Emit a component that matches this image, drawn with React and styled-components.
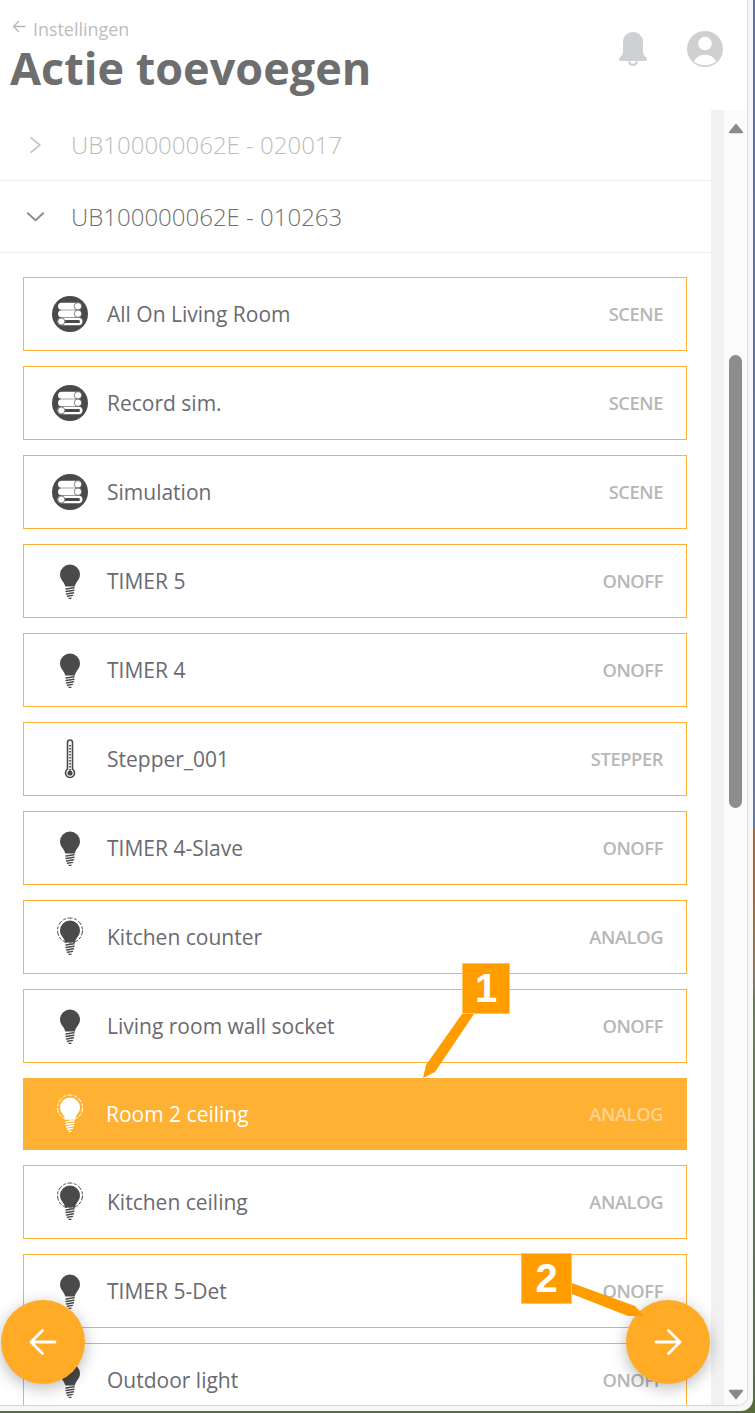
import React from 'react';
import styled, { createGlobalStyle } from 'styled-components';

const Global = createGlobalStyle`
  html, body { margin: 0; padding: 0; background: #fff; }
  #root { width: 755px; height: 1413px; overflow: hidden; }
  * { box-sizing: border-box; }
`;

const Desktop = styled.div`
  position: relative;
  width: 755px;
  height: 1413px;
  overflow: hidden;
  font-family: "Open Sans", "Noto Sans", sans-serif;
  background: linear-gradient(180deg, #5672b0 0, #5e78ae 825px, #a9692c 830px, #a9692c 900px, #8a7a58 975px, #6d7a58 1000px, #566b3a 1413px);
`;
const Frame = styled.div`
  width: 753px;
  height: 1411px;
  padding: 0 5px 5px 0;
  background: #f6f6f6;
  border-bottom-right-radius: 12px;
`;
const Page = styled.div`
  width: 748px;
  height: 1406px;
  display: flex;
  flex-direction: column;
  background: #fff;
  border-right: 1px solid #dcdcdc;
  border-bottom: 1px solid #d8d8d8;
  border-bottom-right-radius: 10px;
  overflow: hidden;
`;
const Header = styled.header`
  height: 110px;
  flex: none;
  display: flex;
  justify-content: space-between;
  padding: 17px 24px 0 10px;
`;
const Titles = styled.div`
  display: flex;
  flex-direction: column;
`;
const Crumb = styled.div`
  display: flex;
  align-items: center;
  gap: 7px;
  padding-left: 2px;
  height: 24px;
  font-size: 17.9px;
  color: #bdbdbd;
`;
const CrumbArrow = styled.svg`
  margin-top: -4px;
`;
const Title = styled.h1`
  margin: 2px 0 0;
  font-size: 45px;
  line-height: 50px;
  font-weight: 700;
  color: #6e6e6e;
`;
const HeaderIcons = styled.div`
  display: flex;
  align-items: flex-start;
  gap: 40px;
  padding-top: 14px;
`;
const Bell = styled.svg`
  margin-top: 1px;
`;
const Body = styled.div`
  flex: 1;
  min-height: 0;
  display: flex;
`;
const ListPane = styled.div`
  width: 711px;
  flex: none;
  overflow: hidden;
`;
const GroupRow = styled.div`
  height: ${p => (p.$first ? '71px' : '72px')};
  display: flex;
  align-items: center;
  gap: 26px;
  padding-left: 26px;
  padding-bottom: ${p => (p.$first ? '1px' : '0')};
  border-bottom: 1px solid #efefef;
  font-size: 24px;
  font-weight: 300;
  color: ${p => (p.$muted ? '#bdbdbd' : '#707070')};
`;
const GroupIcon = styled.span`
  width: 19px;
  display: flex;
  justify-content: center;
  color: ${p => (p.$muted ? '#c6c6c6' : '#8a8a8a')};
`;
const Items = styled.div`
  display: flex;
  flex-direction: column;
  gap: 15px;
  padding: 24px 24px 0 23px;
`;
const Item = styled.div`
  flex: none;
  height: ${p => (p.$active ? '72px' : '74px')};
  display: flex;
  align-items: center;
  padding: 0 23px 0 83px;
  position: relative;
  border: 1px solid #ffb133;
  background: ${p => (p.$active ? '#ffb133' : '#fff')};
`;
const ItemIcon = styled.span`
  position: absolute;
  left: 28px;
  top: 50%;
  transform: translateY(-50%);
  width: 36px;
  height: 40px;
  display: flex;
  align-items: center;
  justify-content: center;
`;
const ItemName = styled.span`
  flex: 1;
  font-size: 21px;
  color: ${p => (p.$active ? '#fff' : '#6a6a70')};
  margin-left: ${p => (p.$active ? '-1px' : '0')};
`;
const ItemType = styled.span`
  font-size: 18.3px;
  font-weight: 600;
  letter-spacing: -0.4px;
  margin-top: -2px;
  color: ${p => (p.$active ? '#ffd48e' : '#b7b7b7')};
`;
const TrackGutter = styled.div`
  width: 13px;
  flex: none;
  background: #f1f1f1;
`;
const Scrollbar = styled.div`
  width: 23px;
  flex: none;
  position: relative;
  display: flex;
  flex-direction: column;
  align-items: center;
  padding-top: 13px;
  background: #fbfbfb;
`;
const Thumb = styled.div`
  width: 13px;
  height: 453px;
  margin-top: 221px;
  border-radius: 7px;
  background: #8d8d8d;
`;
const DownArrow = styled.div`
  position: absolute;
  bottom: 5px;
  left: 4px;
  display: flex;
`;
const Fab = styled.button`
  position: absolute;
  top: 1300px;
  left: ${p => p.$left}px;
  width: 84px;
  height: 84px;
  border: 0;
  padding: 0;
  border-radius: 50%;
  background: #ffab26;
  box-shadow: 0 4px 16px rgba(0, 0, 0, 0.28);
  display: flex;
  align-items: center;
  justify-content: center;
`;
const Badge = styled.div`
  position: absolute;
  left: ${p => p.$left}px;
  top: ${p => p.$top}px;
  width: ${p => p.$width}px;
  height: 51px;
  background: #ff9c00;
  border: 1px solid #ffc466;
  color: #fff;
  font-family: "Liberation Sans", Arial, sans-serif;
  font-weight: 700;
  font-size: 40px;
  line-height: 48px;
  text-align: center;
`;
const Pointer = styled.svg`
  position: absolute;
  left: 0;
  top: 0;
  pointer-events: none;
`;

const Bulb = ({ color = '#4a4a4a', halo }) => (
  <svg width="36" height="40" viewBox="0 0 36 40">
    {halo && <circle cx="18" cy="13.5" r="12.5" fill="none" stroke={color} strokeWidth="1" strokeDasharray="5 1.6 3 1.6" />}
    <path d="M18 3.5a10 10 0 0 0-10 10c0 3.5 2 5.5 3.500 8 .8 1.300 1.500 2.500 1.700 4h9.600c.2-1.500.9-2.700 1.700-4 1.500-2.500 3.500-4.500 3.500-8a10 10 0 0 0-10-10z" fill={color} />
    <g stroke={color} strokeWidth="1.400" strokeLinecap="round" fill="none">
      <path d="M14 28l8-1.200" />
      <path d="M14 30.500l8-1.300" />
      <path d="M14.500 33l7-1.200" />
      <path d="M15.500 35.300l5-.9" />
    </g>
    <path d="M16 36.800h4l-1 1.200h-2z" fill={color} />
  </svg>
);

const SceneIcon = () => (
  <svg width="36" height="36" viewBox="0 0 36 36">
    <circle cx="18" cy="18" r="18" fill="#4a4a4a" />
    <g fill="#fff">
      <rect x="6" y="6.800" width="21" height="7" rx="3.500" />
      <rect x="6" y="14.300" width="21" height="7" rx="3.500" />
      <rect x="5.500" y="21.800" width="25" height="7.500" rx="3.700" />
    </g>
    <rect x="12.500" y="24" width="15.500" height="3" rx="1.500" fill="#4a4a4a" />
    <g fill="#fff" stroke="#4a4a4a" strokeWidth="0.700">
      <circle cx="26" cy="10.300" r="3.700" />
      <circle cx="26" cy="17.700" r="3.700" />
      <circle cx="9.300" cy="25.500" r="3.500" />
    </g>
  </svg>
);

const Thermo = () => (
  <svg width="36" height="40" viewBox="0 0 36 40">
    <path d="M15.500 30.200V3.500a2.500 2.500 0 0 1 5 0v26.700a4.500 4.500 0 1 1-5 0z" fill="#fff" stroke="#4a4a4a" strokeWidth="1.600" />
    <circle cx="18" cy="34" r="2.600" fill="#4a4a4a" />
    <path d="M18 6v26" stroke="#4a4a4a" strokeWidth="1.800" strokeDasharray="1.500 1.500" />
  </svg>
);

const Chevron = ({ down }) => (
  <svg width="20" height="20" viewBox="0 0 20 20" fill="none" stroke="currentColor" strokeWidth="2" strokeLinecap="round" strokeLinejoin="round">
    {down ? <path d="M2 6l8 7.500L18 6" /> : <path d="M5.500 2.500L14.500 10l-9 7.500" />}
  </svg>
);

const items = [
  ['scene', 'All On Living Room', 'SCENE'],
  ['scene', 'Record sim.', 'SCENE'],
  ['scene', 'Simulation', 'SCENE'],
  ['bulb', 'TIMER 5', 'ONOFF'],
  ['bulb', 'TIMER 4', 'ONOFF'],
  ['thermo', 'Stepper_001', 'STEPPER'],
  ['bulb', 'TIMER 4-Slave', 'ONOFF'],
  ['halo', 'Kitchen counter', 'ANALOG'],
  ['bulb', 'Living room wall socket', 'ONOFF'],
  ['halo', 'Room 2 ceiling', 'ANALOG', true],
  ['halo', 'Kitchen ceiling', 'ANALOG'],
  ['bulb', 'TIMER 5-Det', 'ONOFF'],
  ['bulb', 'Outdoor light', 'ONOFF'],
];

const iconFor = (kind, active) => {
  if (kind === 'scene') return <SceneIcon />;
  if (kind === 'thermo') return <Thermo />;
  return <Bulb halo={kind === 'halo'} color={active ? '#fff' : '#4a4a4a'} />;
};

export default function App() {
  return (
    <Desktop>
      <Global />
      <Frame>
        <Page>
          <Header>
            <Titles>
              <Crumb>
                <CrumbArrow width="14" height="14" viewBox="0 0 14 14" fill="none" stroke="#b5b5b5" strokeWidth="1.300" strokeLinecap="round" strokeLinejoin="round">
                  <path d="M13 6.500H1.500M6.500 1.500l-5 5 5 5" />
                </CrumbArrow>
                Instellingen
              </Crumb>
              <Title>Actie toevoegen</Title>
            </Titles>
            <HeaderIcons>
              <Bell width="28" height="34" viewBox="0 0 28 34">
                <path d="M14 0C8.200 0 4 4.500 4 10v9.500c0 2.500-1.200 4.200-3.100 6C.3 26.100 0 26.600 0 27.200 0 28.300.8 29 2 29h24c1.200 0 2-.7 2-1.800 0-.6-.3-1.100-.9-1.700-1.900-1.800-3.100-3.500-3.100-6V10C24 4.500 19.800 0 14 0z" fill="#cfd0d2" />
                <path d="M9 29.500a5 4.500 0 0 0 10 0h-2.500a2.500 2.200 0 0 1-5 0z" fill="#cfd0d2" />
              </Bell>
              <svg width="36" height="36" viewBox="0 0 36 36">
                <circle cx="18" cy="18" r="18" fill="#cfd0d2" />
                <circle cx="18" cy="12.500" r="6.800" fill="#fff" />
                <path d="M7 30.500c2-4.500 6-6.800 11-6.800s9 2.300 11 6.800c-3 2.600-7 3.800-11 3.800s-8-1.200-11-3.800z" fill="#fff" />
              </svg>
            </HeaderIcons>
          </Header>
          <Body>
            <ListPane>
              <GroupRow $first $muted>
                <GroupIcon $muted><Chevron /></GroupIcon>
                UB100000062E - 020017
              </GroupRow>
              <GroupRow>
                <GroupIcon><Chevron down /></GroupIcon>
                UB100000062E - 010263
              </GroupRow>
              <Items>
                {items.map(([kind, name, type, active]) => (
                  <Item key={name} $active={active}>
                    <ItemIcon $active={active}>{iconFor(kind, active)}</ItemIcon>
                    <ItemName $active={active}>{name}</ItemName>
                    <ItemType $active={active}>{type}</ItemType>
                  </Item>
                ))}
              </Items>
            </ListPane>
            <TrackGutter />
            <Scrollbar>
              <svg width="16" height="11" viewBox="0 0 16 11"><path d="M8 1.500L14.500 9.500H1.500z" fill="#8a8a8a" stroke="#8a8a8a" strokeWidth="1.500" strokeLinejoin="round" /></svg>
              <Thumb />
              <DownArrow>
                <svg width="16" height="11" viewBox="0 0 16 11"><path d="M8 9.500L14.500 1.500H1.500z" fill="#8a8a8a" stroke="#8a8a8a" strokeWidth="1.500" strokeLinejoin="round" /></svg>
              </DownArrow>
            </Scrollbar>
          </Body>
        </Page>
      </Frame>
      <Fab $left={1} aria-label="Terug">
        <svg width="30" height="30" viewBox="0 0 30 30" fill="none" stroke="#fff" strokeWidth="2.800" strokeLinecap="round" strokeLinejoin="round">
          <path d="M27 15H3.500M14.500 3.500L3 15l11.500 11.500" />
        </svg>
      </Fab>
      <Fab $left={626} aria-label="Volgende">
        <svg width="30" height="30" viewBox="0 0 30 30" fill="none" stroke="#fff" strokeWidth="2.800" strokeLinecap="round" strokeLinejoin="round">
          <path d="M3 15h24M15.500 3.500L27 15 15.500 26.500" />
        </svg>
      </Fab>
      <Pointer width="755" height="1413" viewBox="0 0 755 1413">
        <path d="M462 1014h12l-39 58-12 6 3-13z" fill="#ff9c00" />
        <path d="M572 1283l63 23 9 10h-16l-56-22z" fill="#ff9c00" />
      </Pointer>
      <Badge $left={462} $top={963} $width={48}>1</Badge>
      <Badge $left={521} $top={1253} $width={51}>2</Badge>
    </Desktop>
  );
}
